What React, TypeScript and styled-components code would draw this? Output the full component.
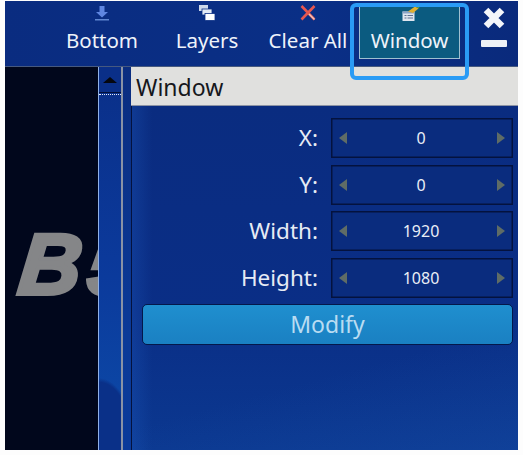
import { Fragment } from 'react';
import styled, { createGlobalStyle } from 'styled-components';

const GlobalStyles = createGlobalStyle`
  html, body {
    margin: 0;
    padding: 0;
    background: #fdfdfd;
  }
  body {
    font-family: "Noto Sans", "Open Sans", sans-serif;
  }
`;

const Frame = styled.div`
  position: relative;
  width: 513px;
  height: 449px;
  margin: 1px 0 0 5px;
  display: flex;
  flex-direction: column;
  overflow: hidden;
  background: #0a2d80;
`;

const Toolbar = styled.div`
  height: 65px;
  display: flex;
  padding-left: 42px;
  background: linear-gradient(90deg, #0a2c80 0%, #0a2f86 60%, #0a2a7c 100%);
  flex: none;
`;

const Tool = styled.div<{ $width: number; $active?: boolean }>`
  width: ${({ $width }) => $width}px;
  height: ${({ $active }) => ($active ? '55px' : '65px')};
  margin-top: ${({ $active }) => ($active ? '3px' : '0')};
  box-sizing: border-box;
  display: flex;
  flex-direction: column;
  align-items: center;
  padding-top: ${({ $active }) => ($active ? '1px' : '4px')};
  background: ${({ $active }) => ($active ? '#0b5b80' : 'transparent')};
  border: ${({ $active }) => ($active ? '1px solid #9fc0d0' : 'none')};
  border-top: none;
  color: #eef3fa;
  font-size: 20.5px;
  line-height: 27px;
`;

const ToolIcon = styled.svg`
  display: block;
  width: 16px;
  height: 16px;
  margin-bottom: 6px;
  overflow: visible;
`;

const WindowControls = styled.div`
  width: 58px;
  display: flex;
  flex-direction: column;
  align-items: center;
  padding: 6px 0 0 10px;
  box-sizing: border-box;
  gap: 11px;
`;

const Body = styled.div`
  flex: 1;
  display: flex;
  min-height: 0;
  border-top: 1px solid #46597f;
`;

const Preview = styled.div`
  width: 93px;
  flex: none;
  overflow: hidden;
  background: #01071c;
  padding: 152px 0 0 10px;
  box-sizing: border-box;
`;

const Logo = styled.div`
  width: max-content;
  font-family: "Liberation Sans", Arial, sans-serif;
  font-weight: 700;
  font-style: italic;
  font-size: 86px;
  line-height: 90px;
  letter-spacing: 7px;
  color: #858688;
  white-space: nowrap;
  -webkit-text-stroke: 4px #858688;
  transform: skewX(-6deg);
  transform-origin: left bottom;
`;

const Scrollbar = styled.div`
  width: 25px;
  flex: none;
  box-sizing: border-box;
  display: flex;
  flex-direction: column;
  border-left: 1px solid #8fb0e8;
  border-right: 2px solid #8a93a5;
  background:
    radial-gradient(37px 72px at 0% 100%, #0a3088 94%, transparent 100%),
    linear-gradient(180deg, #0a2f88 0%, #0b3a9c 55%, #0c4ba8 100%);
`;

const ScrollButton = styled.div`
  height: 25px;
  flex: none;
  display: flex;
  align-items: center;
  justify-content: center;
  background: #0a2f88;
  border-bottom: 1px solid #02103a;
  &::before {
    content: '';
    border-left: 7px solid transparent;
    border-right: 7px solid transparent;
    border-bottom: 6px solid #05070f;
  }
`;

const ScrollThumbEdge = styled.div`
  height: 0;
  margin-top: 1px;
  border-top: 1px dotted #e6ecf8;
`;

const Gutter = styled.div`
  width: 8px;
  flex: none;
  background: linear-gradient(180deg, #0a2d80 0%, #0b3a98 70%, #0a3a9a 100%);
`;

const Panel = styled.div`
  flex: 1;
  min-width: 0;
  display: flex;
  flex-direction: column;
`;

const PanelHeader = styled.div`
  height: 39px;
  flex: none;
  box-sizing: border-box;
  padding-left: 5px;
  background: #e0e0de;
  color: #15171c;
  font-size: 23px;
  line-height: 40px;
  border-bottom: 1px solid #8c93a4;
`;

const PanelBody = styled.div`
  flex: 1;
  box-sizing: border-box;
  padding: 12px 5px 0 11px;
  border-left: 1px solid #04123e;
  background:
    linear-gradient(90deg, rgba(30, 90, 190, 0.3) 0, transparent 20px),
    linear-gradient(165deg, transparent 72%, rgba(30, 90, 180, 0.25) 100%),
    linear-gradient(180deg, #0a2c80 0%, #0a2e86 60%, #0b3890 100%);
`;

const Form = styled.div`
  display: grid;
  grid-template-columns: 1fr 182px;
  grid-auto-rows: 40px;
  column-gap: 13px;
  row-gap: 6.5px;
  align-items: center;
`;

const Label = styled.div`
  text-align: right;
  color: #e6ebf4;
  font-size: 22.5px;
  line-height: 40px;
`;

const Spinner = styled.div`
  height: 40px;
  box-sizing: border-box;
  display: flex;
  align-items: center;
  justify-content: space-between;
  padding: 0 7px;
  background: #0a2c7e;
  border: 1px solid #04123e;
  box-shadow: inset 0 0 0 0.5px #04123e;
`;

const SpinArrow = styled.span<{ $right?: boolean }>`
  width: 0;
  height: 0;
  border-top: 6px solid transparent;
  border-bottom: 6px solid transparent;
  ${({ $right }) =>
    $right ? 'border-left: 8px solid #5f6c66;' : 'border-right: 8px solid #5f6c66;'}
`;

const SpinValue = styled.span`
  color: #e9eef6;
  font-size: 16px;
  margin-right: 2px;
`;

const ModifyButton = styled.div`
  height: 41px;
  margin-top: 6.5px;
  margin-left: -1px;
  box-sizing: border-box;
  border: 1px solid #04184a;
  border-radius: 5px;
  background: linear-gradient(180deg, #1f8fcf 0%, #1a80c2 100%);
  color: #b9dcf2;
  font-size: 23px;
  line-height: 38px;
  text-align: center;
`;

const Highlight = styled.div`
  position: absolute;
  left: 345px;
  top: 2px;
  width: 119px;
  height: 77px;
  box-sizing: border-box;
  border: 4px solid #2a9bf5;
  border-radius: 6px;
  pointer-events: none;
`;

const rows = [
  { label: 'X:', value: 0 },
  { label: 'Y:', value: 0 },
  { label: 'Width:', value: 1920 },
  { label: 'Height:', value: 1080 }
];

const BottomIcon = () => (
  <ToolIcon viewBox="0 0 16 16">
    <path d="M5.500 1h5v6h3.500L8 12.500 2 7h3.500z" fill="#5f86e0" />
    <rect x="1" y="14" width="14" height="1.500" fill="#5f86d0" />
  </ToolIcon>
);

const LayersIcon = () => (
  <ToolIcon viewBox="0 0 16 16">
    <rect x="0" y="0" width="9" height="6" fill="#cdd8ea" />
    <rect x="3" y="4" width="10" height="6" fill="#e4ebf5" stroke="#0a2f86" strokeWidth="0.800" />
    <rect x="6" y="8.500" width="10" height="7" fill="#ffffff" stroke="#0a2f86" strokeWidth="0.800" />
  </ToolIcon>
);

const ClearIcon = () => (
  <ToolIcon viewBox="0 0 16 16">
    <path d="M1.500 1l13 13.500M14.500 1L1.500 14.500" stroke="#e8574f" strokeWidth="2.600" />
    <path d="M9 9l5.500 5.500" stroke="#f0c8c0" strokeWidth="1.400" />
  </ToolIcon>
);

const WindowIcon = () => (
  <ToolIcon viewBox="0 0 16 16">
    <rect x="0.500" y="6.500" width="12" height="9.500" fill="#dfe6ef" />
    <rect x="0.500" y="6.500" width="12" height="2" fill="#8aa3c6" />
    <path d="M2.500 10.500h2M5.500 10.500h5.500M2.500 13h2M5.500 13h5.500" stroke="#5d7190" strokeWidth="1" />
    <path d="M6 6.500l7-5 3.500 2-5.500 4.500z" fill="#e0b030" />
    <path d="M13.500 1.500l3 2 1-1.500-2.500-2z" fill="#5fa03c" />
  </ToolIcon>
);

export default function App() {
  return (
    <>
      <GlobalStyles />
      <Frame>
        <Toolbar>
          <Tool $width={110}>
            <BottomIcon />
            Bottom
          </Tool>
          <Tool $width={100}>
            <LayersIcon />
            Layers
          </Tool>
          <Tool $width={102}>
            <ClearIcon />
            Clear All
          </Tool>
          <Tool $width={101} $active>
            <WindowIcon />
            Window
          </Tool>
          <WindowControls>
            <svg width="22" height="22" viewBox="0 0 22 22">
              <path d="M3 3l16 16M19 3L3 19" stroke="#f4f6fa" strokeWidth="6.500" />
            </svg>
            <svg width="26" height="7" viewBox="0 0 26 7">
              <rect width="26" height="7" rx="1" fill="#eef1f6" />
            </svg>
          </WindowControls>
        </Toolbar>
        <Body>
          <Preview>
            <Logo>B5</Logo>
          </Preview>
          <Scrollbar>
            <ScrollButton />
            <ScrollThumbEdge />
          </Scrollbar>
          <Gutter />
          <Panel>
            <PanelHeader>Window</PanelHeader>
            <PanelBody>
              <Form>
                {rows.map(row => (
                  <Fragment key={row.label}>
                    <Label>{row.label}</Label>
                    <Spinner>
                      <SpinArrow />
                      <SpinValue>{row.value}</SpinValue>
                      <SpinArrow $right />
                    </Spinner>
                  </Fragment>
                ))}
              </Form>
              <ModifyButton>Modify</ModifyButton>
            </PanelBody>
          </Panel>
        </Body>
        <Highlight />
      </Frame>
    </>
  );
}
